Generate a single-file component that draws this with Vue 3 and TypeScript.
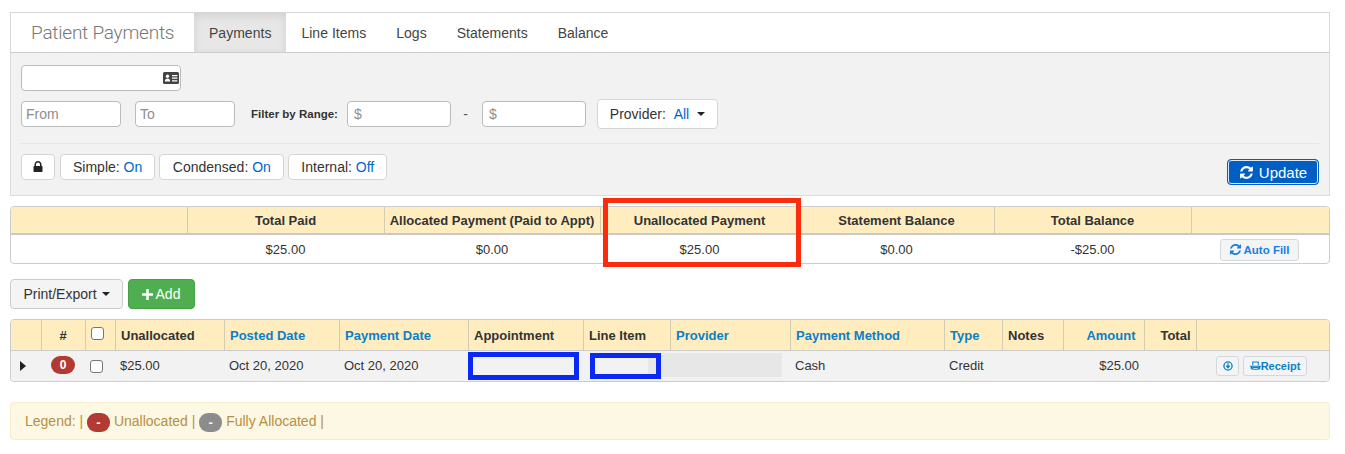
<script setup lang="ts">
interface Col {
  label: string
  width: number
  link?: boolean
  align?: 'left' | 'right' | 'center'
}

const tabs = ['Payments', 'Line Items', 'Logs', 'Statements', 'Balance']

const summaryCols: Col[] = [
  { label: '', width: 176 },
  { label: 'Total Paid', width: 197 },
  { label: 'Allocated Payment (Paid to Appt)', width: 216 },
  { label: 'Unallocated Payment', width: 199 },
  { label: 'Statement Balance', width: 195 },
  { label: 'Total Balance', width: 197 },
  { label: '', width: 138 },
]
const summaryValues = ['$25.00', '$0.00', '$25.00', '$0.00', '-$25.00']

const paymentCols: Col[] = [
  { label: '', width: 30 },
  { label: '#', width: 44, align: 'center' },
  { label: '', width: 30 },
  { label: 'Unallocated', width: 109 },
  { label: 'Posted Date', width: 115, link: true },
  { label: 'Payment Date', width: 129, link: true },
  { label: 'Appointment', width: 115 },
  { label: 'Line Item', width: 87 },
  { label: 'Provider', width: 120, link: true },
  { label: 'Payment Method', width: 154, link: true },
  { label: 'Type', width: 58, link: true },
  { label: 'Notes', width: 61 },
  { label: 'Amount', width: 81, link: true, align: 'right' },
  { label: 'Total', width: 52, align: 'right' },
  { label: '', width: 133 },
]

const refreshPath =
  'M1639 1056q0 5-1 7-64 268-268 434.5t-478 166.5q-146 0-282.5-55t-243.5-157l-129 129q-19 19-45 19t-45-19-19-45v-448q0-26 19-45t45-19h448q26 0 45 19t19 45-19 45l-137 137q71 66 161 102t187 36q134 0 250-65t186-179q11-17 53-117 8-23 30-23h192q13 0 22.5 9.5t9.5 22.5zm25-800v448q0 26-19 45t-45 19h-448q-26 0-45-19t-19-45 19-45l138-138q-148-137-349-137-134 0-250 65t-186 179q-11 17-53 117-8 23-30 23h-199q-13 0-22.5-9.5t-9.5-22.5v-7q65-268 270-434.5t480-166.5q146 0 284 55.5t245 156.5l130-129q19-19 45-19t45 19 19 45z'
</script>

<template>
  <div class="page">
    <nav class="topnav">
      <div class="brand">Patient Payments</div>
      <a v-for="(tab, i) in tabs" :key="tab" class="tab" :class="{ active: i === 0 }">{{ tab }}</a>
    </nav>

    <section class="filters">
      <div class="patient-input">
        <svg class="id-card" viewBox="0 0 16 12" aria-hidden="true">
          <rect width="16" height="12" rx="1.5" fill="#444" />
          <circle cx="4.5" cy="4.2" r="1.7" fill="#fff" />
          <path d="M1.8 9.6c0-2 1.2-3 2.7-3s2.7 1 2.7 3z" fill="#fff" />
          <path d="M9 3h5.4v1.2H9zM9 5.6h5.4v1.2H9zM9 8.2h5.4v1.2H9z" fill="#fff" />
        </svg>
      </div>

      <div class="range-row">
        <div class="field date">From</div>
        <div class="field date to">To</div>
        <label class="range-label">Filter by Range:</label>
        <div class="field money">$</div>
        <span class="dash">-</span>
        <div class="field money">$</div>
        <button class="btn provider">Provider:&nbsp; <span class="on">All</span><i class="caret" /></button>
      </div>

      <hr class="divider" />

      <div class="toggle-row">
        <button class="btn toggle lock" aria-label="Lock">
          <svg viewBox="0 0 1792 1792" width="14" height="14" aria-hidden="true">
            <path fill="#222" d="M640 768h512v-192q0-106-75-181t-181-75-181 75-75 181v192zm832 96v576q0 40-28 68t-68 28h-960q-40 0-68-28t-28-68v-576q0-40 28-68t68-28h32v-192q0-184 132-316t316-132 316 132 132 316v192h32q40 0 68 28t28 68z" />
          </svg>
        </button>
        <button class="btn toggle">Simple: <span class="on">On</span></button>
        <button class="btn toggle condensed">Condensed: <span class="on">On</span></button>
        <button class="btn toggle">Internal: <span class="on">Off</span></button>
        <div class="spacer" />
        <button class="update">
          <svg viewBox="0 0 1792 1792" width="15" height="15" aria-hidden="true">
            <path fill="#fff" :d="refreshPath" />
          </svg>
          Update
        </button>
      </div>
    </section>

    <div class="table-wrap summary">
      <table>
        <colgroup>
          <col v-for="(c, i) in summaryCols" :key="i" :style="{ width: c.width + 'px' }" />
        </colgroup>
        <thead>
          <tr>
            <th v-for="(c, i) in summaryCols" :key="i">{{ c.label }}</th>
          </tr>
        </thead>
        <tbody>
          <tr>
            <td />
            <td v-for="(v, i) in summaryValues" :key="i">{{ v }}</td>
            <td class="fill-cell">
              <button class="mini autofill">
                <svg viewBox="0 0 1792 1792" width="13" height="13" aria-hidden="true">
                  <path fill="#1a7fe0" :d="refreshPath" />
                </svg>
                Auto Fill
              </button>
            </td>
          </tr>
        </tbody>
      </table>
    </div>

    <div class="actions">
      <button class="btn print">Print/Export<i class="caret" /></button>
      <button class="add">
        <svg viewBox="0 0 12 12" width="11" height="11" aria-hidden="true">
          <path fill="#fff" d="M4.6 0h2.8v4.6H12v2.8H7.4V12H4.6V7.4H0V4.6h4.6z" />
        </svg>
        Add
      </button>
    </div>

    <div class="table-wrap payments">
      <table>
        <colgroup>
          <col v-for="(c, i) in paymentCols" :key="i" :style="{ width: c.width + 'px' }" />
        </colgroup>
        <thead>
          <tr>
            <th
              v-for="(c, i) in paymentCols"
              :key="i"
              :class="[c.align ?? 'left', { link: c.link }]"
            >
              <span v-if="i === 2" class="check head-check" />
              <template v-else>{{ c.label }}</template>
            </th>
          </tr>
        </thead>
        <tbody>
          <tr>
            <td class="center"><i class="expander" /></td>
            <td class="center"><span class="pill red">0</span></td>
            <td><span class="check" /></td>
            <td>$25.00</td>
            <td>Oct 20, 2020</td>
            <td>Oct 20, 2020</td>
            <td />
            <td />
            <td />
            <td>Cash</td>
            <td>Credit</td>
            <td />
            <td class="right">$25.00</td>
            <td />
            <td class="row-actions">
              <button class="mini icon-only" aria-label="Details">
                <svg viewBox="0 0 12 12" width="10" height="10" aria-hidden="true">
                  <circle cx="6" cy="6" r="4.9" fill="none" stroke="#0b7fc7" stroke-width="1.6" />
                  <path d="M6 2.8v4M3.9 5.6 6 8.2l2.1-2.6" fill="none" stroke="#0b7fc7" stroke-width="1.5" />
                </svg>
              </button>
              <button class="mini receipt">
                <svg viewBox="0 0 14 12" width="11" height="10" aria-hidden="true">
                  <path d="M3.5 5V1h7v4M3.5 10h7V8h-7z" fill="none" stroke="#0b7fc7" stroke-width="1.3" />
                  <path d="M0 5.6h14v1.4H0zM1 7h2v3H1zM11 7h2v3h-2z" fill="#0b7fc7" />
                </svg>Receipt
              </button>
            </td>
          </tr>
        </tbody>
      </table>
    </div>

    <div class="legend">
      Legend: | <span class="pill red wide">-</span> Unallocated | <span class="pill grey wide">-</span> Fully Allocated |
    </div>

    <div class="redact provider-cell" />
    <div class="mark red-box" />
    <div class="mark blue-box appt" />
    <div class="mark blue-box item" />
  </div>
</template>

<style>
html,
body {
  margin: 0;
  background: #fff;
}
</style>

<style scoped>
.page {
  position: relative;
  box-sizing: border-box;
  width: 1345px;
  height: 454px;
  padding: 12px 15px 0 10px;
  overflow: hidden;
  font-family: "Liberation Sans", Arial, sans-serif;
  font-size: 13px;
  color: #333;
}
button {
  font-family: inherit;
  cursor: pointer;
}

.topnav {
  display: flex;
  height: 41px;
  box-sizing: border-box;
  background: #fff;
  border: 1px solid #d8d8d8;
  border-bottom-color: #ccc;
}
.brand {
  width: 183px;
  padding-left: 20px;
  box-sizing: border-box;
  font-family: Roboto, "Liberation Sans", sans-serif;
  font-weight: 300;
  font-size: 19px;
  letter-spacing: -0.22px;
  line-height: 40px;
  color: #777;
}
.tab {
  padding: 0 15px;
  font-size: 14px;
  letter-spacing: 0.02px;
  line-height: 40px;
  color: #444;
}
.tab.active {
  background: #e7e7e7;
  box-shadow: inset 0 3px 8px rgba(0, 0, 0, 0.1);
}

.filters {
  display: flex;
  flex-direction: column;
  align-items: flex-start;
  height: 143px;
  box-sizing: border-box;
  padding: 12px 10px 0;
  background: #f2f2f2;
  border: 1px solid #dcdcdc;
  border-top: 0;
}
.patient-input {
  display: flex;
  align-items: center;
  justify-content: flex-end;
  width: 160px;
  height: 26px;
  box-sizing: border-box;
  padding-right: 1px;
  background: #fff;
  border: 1px solid #bbb;
  border-radius: 4px;
}
.id-card {
  width: 16px;
  height: 12px;
}
.range-row {
  display: flex;
  align-items: center;
  height: 30px;
  margin-top: 8px;
}
.field {
  height: 26px;
  box-sizing: border-box;
  padding-left: 4px;
  background: #fff;
  border: 1px solid #bbb;
  border-radius: 4px;
  font-size: 14px;
  line-height: 24px;
  color: #8e8e8e;
}
.date {
  width: 100px;
}
.date.to {
  margin-left: 14px;
}
.range-label {
  width: 87px;
  margin: 0 9px 0 16px;
  font-size: 11.5px;
  font-weight: 700;
  color: #333;
  white-space: nowrap;
}
.money {
  width: 104px;
  padding-left: 6px;
}
.dash {
  width: 31px;
  padding-right: 2px;
  box-sizing: border-box;
  text-align: center;
  font-size: 14px;
  color: #555;
}
.btn {
  display: inline-flex;
  align-items: center;
  justify-content: center;
  box-sizing: border-box;
  background: #fff;
  border: 1px solid #d5d5d5;
  border-radius: 4px;
  font-size: 14px;
  color: #333;
  white-space: pre;
}
.provider {
  width: 121px;
  height: 30px;
  margin-left: 11px;
}
.on {
  color: #0066cc;
}
.caret {
  display: inline-block;
  margin-left: 5px;
  border-top: 4px solid #222;
  border-left: 4px solid transparent;
  border-right: 4px solid transparent;
}
.provider .caret {
  margin-left: 8px;
}
.divider {
  align-self: stretch;
  height: 0;
  margin: 14px 0 10px;
  border: 0;
  border-top: 1px solid #e6e6e6;
}
.toggle-row {
  display: flex;
  align-self: stretch;
  align-items: flex-start;
  gap: 4px;
}
.toggle {
  height: 26px;
  padding: 0 12px;
}
.toggle.condensed {
  padding: 0 12.5px;
}
.lock {
  width: 34px;
  padding: 0;
  margin-right: 1px;
}
.spacer {
  flex: 1;
}
.update {
  display: inline-flex;
  align-items: center;
  justify-content: center;
  gap: 5px;
  width: 92px;
  height: 26px;
  margin: 5px 0 0;
  background: #005fc4;
  border: 1px solid #005fc4;
  border-radius: 4px;
  box-shadow: inset 0 0 0 1px #dfeafa;
  color: #fff;
  font-size: 15px;
}

.table-wrap {
  box-sizing: border-box;
  border: 1px solid #ccc;
  border-radius: 4px;
  overflow: hidden;
}
table {
  width: 1318px;
  table-layout: fixed;
  border-collapse: collapse;
}
th {
  padding: 0 5px;
  background: #ffedc0;
  border-right: 1px solid #d5cbb0;
  font-size: 13px;
  font-weight: 700;
  color: #333;
  white-space: nowrap;
}
th:last-child {
  border-right: 0;
}
td {
  padding: 0 5px;
  white-space: nowrap;
}

.summary {
  height: 58px;
  margin-top: 10px;
}
.summary th {
  height: 26px;
  border-bottom: 2px solid #c8c8c8;
}
.summary td {
  height: 28px;
  padding-bottom: 1px;
  text-align: center;
}
.summary td.fill-cell {
  padding: 0 7px 0 5px;
}
.mini {
  box-sizing: border-box;
  background: #f3f4f5;
  border: 1px solid #d5d8db;
  border-radius: 3px;
  font-weight: 700;
  font-size: 11px;
  color: #0b7fc7;
}
.autofill {
  display: inline-flex;
  align-items: center;
  justify-content: center;
  gap: 2px;
  width: 79px;
  height: 22px;
  padding: 0;
  font-size: 11.5px;
  color: #1a7fe0;
  vertical-align: middle;
}

.actions {
  display: flex;
  gap: 5px;
  margin-top: 15px;
}
.print {
  width: 113px;
  height: 30px;
  background: #f4f4f4;
  border-color: #ccc;
}
.add {
  display: inline-flex;
  align-items: center;
  justify-content: center;
  gap: 3px;
  width: 67px;
  height: 30px;
  padding: 0 1px 0 0;
  background: #4fae4f;
  border: 1px solid #46a046;
  border-radius: 4px;
  font-size: 14px;
  color: #fff;
}

.payments {
  height: 63px;
  margin-top: 10px;
}
.payments th {
  height: 30px;
  padding: 2px 5.5px 0;
  box-sizing: border-box;
  border-bottom: 1px solid #ccc;
}
.payments th.right {
  padding-right: 5px;
}
.payments th.link.right {
  padding-right: 8px;
}
.payments td {
  height: 31px;
  padding-bottom: 1px;
  box-sizing: border-box;
  background: #f2f2f2;
}
th.left {
  text-align: left;
}
th.right,
td.right {
  text-align: right;
}
th.center,
td.center {
  text-align: center;
}
th.link {
  color: #0b7fc7;
}
.expander {
  display: inline-block;
  margin-right: 6px;
  border-left: 6px solid #222;
  border-top: 5px solid transparent;
  border-bottom: 5px solid transparent;
  vertical-align: middle;
}
.pill {
  display: inline-block;
  box-sizing: border-box;
  width: 24px;
  height: 18px;
  border-radius: 9px;
  color: #fff;
  font-size: 12px;
  font-weight: 700;
  line-height: 18px;
  text-align: center;
  vertical-align: middle;
}
.pill.red {
  background: #b23a33;
}
.pill.grey {
  background: #8c8c8c;
}
.pill.wide {
  width: 23px;
  height: 19px;
  line-height: 19px;
  font-size: 13px;
}
.check {
  display: inline-block;
  box-sizing: border-box;
  width: 13px;
  height: 13px;
  background: #fff;
  border: 1px solid #767676;
  border-radius: 3px;
  vertical-align: middle;
}
.head-check {
  margin-bottom: 4px;
}
.payments td.row-actions {
  padding: 0 0 0 20px;
}
.icon-only,
.receipt {
  display: inline-flex;
  align-items: center;
  justify-content: center;
  height: 20px;
  padding: 0;
  vertical-align: middle;
}
.icon-only {
  width: 23px;
  margin-right: 4px;
}
.receipt {
  width: 64px;
}

.legend {
  height: 38px;
  box-sizing: border-box;
  margin-top: 20px;
  padding-left: 14px;
  background: #fcf8e3;
  border: 1px solid #faebcc;
  border-radius: 4px;
  font-size: 14px;
  line-height: 36px;
  color: #b98e45;
}

.redact {
  position: absolute;
  background: #e7e7e7;
}
.provider-cell {
  left: 648px;
  top: 353px;
  width: 134px;
  height: 24px;
}
.mark {
  position: absolute;
  box-sizing: border-box;
}
.red-box {
  left: 603px;
  top: 198px;
  width: 198px;
  height: 69px;
  border: 5px solid #fb2c0e;
}
.blue-box {
  border: 5px solid #0a29f5;
}
.appt {
  left: 468px;
  top: 352px;
  width: 111px;
  height: 28px;
}
.item {
  left: 590px;
  top: 353px;
  width: 71px;
  height: 26px;
}
</style>
